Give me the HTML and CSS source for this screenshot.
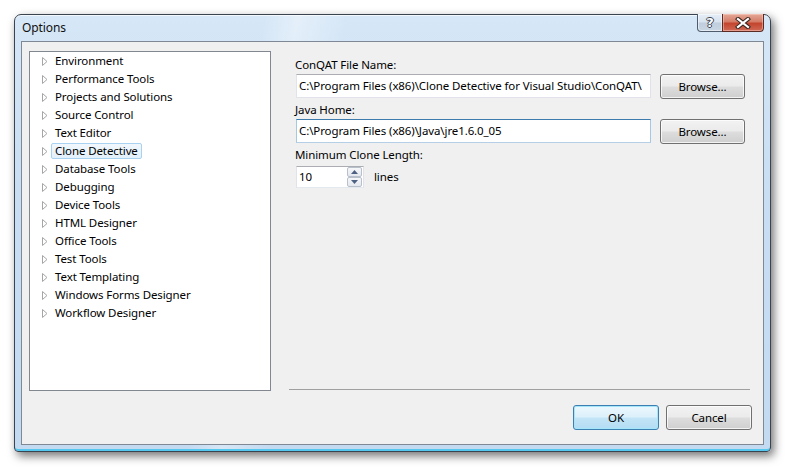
FILE: index.html
```html
<!DOCTYPE html>
<html>
<head>
<meta charset="utf-8">
<title>Options</title>
<link rel="stylesheet" href="styles.css">
</head>
<body>
<div class="window">
  <div class="titlebar">
    <span class="title">Options</span>
    <div class="caption-btns">
      <div class="cb help"><span class="q">?</span></div>
      <div class="cb close">
        <svg width="16" height="12" viewBox="0 0 16 12">
          <path d="M3 2 L13 10 M13 2 L3 10" stroke="#3b2620" stroke-width="4.2" stroke-linecap="square"/>
          <path d="M3 2 L13 10 M13 2 L3 10" stroke="#ffffff" stroke-width="2.2" stroke-linecap="square"/>
        </svg>
      </div>
    </div>
  </div>
  <div class="client">
    <div class="tree">
      <div class="node"><svg class="arrow" width="6" height="9" viewBox="0 0 6 9"><path d="M0.5 0.5 L5 4.5 L0.5 8.5 Z" fill="#fff" stroke="#a6a6a6"/></svg><span class="label">Environment</span></div>
      <div class="node"><svg class="arrow" width="6" height="9" viewBox="0 0 6 9"><path d="M0.5 0.5 L5 4.5 L0.5 8.5 Z" fill="#fff" stroke="#a6a6a6"/></svg><span class="label">Performance Tools</span></div>
      <div class="node"><svg class="arrow" width="6" height="9" viewBox="0 0 6 9"><path d="M0.5 0.5 L5 4.5 L0.5 8.5 Z" fill="#fff" stroke="#a6a6a6"/></svg><span class="label">Projects and Solutions</span></div>
      <div class="node"><svg class="arrow" width="6" height="9" viewBox="0 0 6 9"><path d="M0.5 0.5 L5 4.5 L0.5 8.5 Z" fill="#fff" stroke="#a6a6a6"/></svg><span class="label">Source Control</span></div>
      <div class="node"><svg class="arrow" width="6" height="9" viewBox="0 0 6 9"><path d="M0.5 0.5 L5 4.5 L0.5 8.5 Z" fill="#fff" stroke="#a6a6a6"/></svg><span class="label">Text Editor</span></div>
      <div class="node"><svg class="arrow" width="6" height="9" viewBox="0 0 6 9"><path d="M0.5 0.5 L5 4.5 L0.5 8.5 Z" fill="#fff" stroke="#a6a6a6"/></svg><span class="label selected">Clone Detective</span></div>
      <div class="node"><svg class="arrow" width="6" height="9" viewBox="0 0 6 9"><path d="M0.5 0.5 L5 4.5 L0.5 8.5 Z" fill="#fff" stroke="#a6a6a6"/></svg><span class="label">Database Tools</span></div>
      <div class="node"><svg class="arrow" width="6" height="9" viewBox="0 0 6 9"><path d="M0.5 0.5 L5 4.5 L0.5 8.5 Z" fill="#fff" stroke="#a6a6a6"/></svg><span class="label">Debugging</span></div>
      <div class="node"><svg class="arrow" width="6" height="9" viewBox="0 0 6 9"><path d="M0.5 0.5 L5 4.5 L0.5 8.5 Z" fill="#fff" stroke="#a6a6a6"/></svg><span class="label">Device Tools</span></div>
      <div class="node"><svg class="arrow" width="6" height="9" viewBox="0 0 6 9"><path d="M0.5 0.5 L5 4.5 L0.5 8.5 Z" fill="#fff" stroke="#a6a6a6"/></svg><span class="label">HTML Designer</span></div>
      <div class="node"><svg class="arrow" width="6" height="9" viewBox="0 0 6 9"><path d="M0.5 0.5 L5 4.5 L0.5 8.5 Z" fill="#fff" stroke="#a6a6a6"/></svg><span class="label">Office Tools</span></div>
      <div class="node"><svg class="arrow" width="6" height="9" viewBox="0 0 6 9"><path d="M0.5 0.5 L5 4.5 L0.5 8.5 Z" fill="#fff" stroke="#a6a6a6"/></svg><span class="label">Test Tools</span></div>
      <div class="node"><svg class="arrow" width="6" height="9" viewBox="0 0 6 9"><path d="M0.5 0.5 L5 4.5 L0.5 8.5 Z" fill="#fff" stroke="#a6a6a6"/></svg><span class="label">Text Templating</span></div>
      <div class="node"><svg class="arrow" width="6" height="9" viewBox="0 0 6 9"><path d="M0.5 0.5 L5 4.5 L0.5 8.5 Z" fill="#fff" stroke="#a6a6a6"/></svg><span class="label">Windows Forms Designer</span></div>
      <div class="node"><svg class="arrow" width="6" height="9" viewBox="0 0 6 9"><path d="M0.5 0.5 L5 4.5 L0.5 8.5 Z" fill="#fff" stroke="#a6a6a6"/></svg><span class="label">Workflow Designer</span></div>
    </div>
    <div class="panel">
      <div class="form">
        <div class="field-label first">ConQAT File Name:</div>
        <div class="field-row">
          <div class="textbox">C:\Program Files (x86)\Clone Detective for Visual Studio\ConQAT\</div>
          <button class="btn browse">Browse...</button>
        </div>
        <div class="field-label">Java Home:</div>
        <div class="field-row">
          <div class="textbox focused">C:\Program Files (x86)\Java\jre1.6.0_05</div>
          <button class="btn browse">Browse...</button>
        </div>
        <div class="field-label">Minimum Clone Length:</div>
        <div class="spin-row">
          <div class="spinbox">
            <span class="spin-value">10</span>
            <div class="spin-btns">
              <div class="spin-btn"><svg width="7" height="4" viewBox="0 0 7 4"><path d="M0 4 L3.5 0 L7 4 Z" fill="#4d6185"/></svg></div>
              <div class="spin-btn"><svg width="7" height="4" viewBox="0 0 7 4"><path d="M0 0 L3.5 4 L7 0 Z" fill="#4d6185"/></svg></div>
            </div>
          </div>
          <span class="spin-unit">lines</span>
        </div>
      </div>
      <div class="separator"></div>
      <div class="dialog-buttons">
        <button class="btn default">OK</button>
        <button class="btn">Cancel</button>
      </div>
    </div>
  </div>
</div>
</body>
</html>
```
FILE: styles.css
```css
* { box-sizing: border-box; }
html, body { margin: 0; padding: 0; }
body {
  background: #ffffff;
  width: 789px;
  height: 470px;
  overflow: hidden;
  font-family: "Noto Sans", "Open Sans", sans-serif;
  font-size: 11.5px;
  letter-spacing: -0.1px;
  color: #000;
}
.window {
  margin: 14px 0 0 14px;
  width: 757px;
  height: 438px;
  border: 1px solid #3a4350;
  border-radius: 7px 7px 4px 4px;
  padding: 0 6px 6px 6px;
  display: flex;
  flex-direction: column;
  background:
    linear-gradient(100deg, rgba(255,255,255,0) 30%, rgba(255,255,255,0.35) 34%, rgba(255,255,255,0) 40%),
    linear-gradient(180deg, #d6e7f7 0%, #c9def3 40%, #c3daf1 100%);
  box-shadow: inset 0 -2px 0 #55c8ef, inset 0 1px 0 rgba(255,255,255,0.7), 3px 4px 10px rgba(0,0,0,0.55);
}
.titlebar {
  height: 26px;
  display: flex;
  align-items: flex-start;
  justify-content: space-between;
}
.title {
  margin: 5px 0 0 1px;
  line-height: 15px;
  font-size: 12px;
  color: #111;
}
.caption-btns {
  display: flex;
  margin-top: -1px;
}
.cb {
  height: 18px;
  border: 1px solid #4f5c6e;
  border-top: none;
  display: flex;
  align-items: center;
  justify-content: center;
}
.help {
  width: 26px;
  border-radius: 0 0 0 4px;
  background: linear-gradient(180deg, #e6eef7 0%, #d7e2ee 48%, #bfcddd 52%, #c9d6e3 100%);
  box-shadow: inset 0 0 0 1px rgba(255,255,255,0.5);
}
.q {
  font-family: "DejaVu Sans", sans-serif;
  font-weight: bold;
  font-size: 13px;
  line-height: 13px;
  color: #fff;
  text-shadow: 1px 0 0 #3b4450, -1px 0 0 #3b4450, 0 1px 0 #3b4450, 0 -1px 0 #3b4450;
}
.close {
  width: 42px;
  margin-left: -1px;
  border-radius: 0 0 4px 0;
  border-color: #5b2a22;
  background: linear-gradient(180deg, #e4a797 0%, #d47d68 45%, #c4452e 55%, #cf6a55 100%);
  box-shadow: inset 0 0 0 1px rgba(255,220,210,0.45);
}
.close svg { display: block; }

.client {
  height: 404px;
  border: 1px solid #7f8996;
  background: #f0f0f0;
  display: flex;
  padding: 9px 13px 0 7px;
}
.tree {
  width: 242px;
  height: 340px;
  border: 1px solid #828790;
  background: #fff;
  flex: none;
}
.node {
  height: 18px;
  display: flex;
  align-items: center;
  padding-left: 12px;
}
.arrow { display: block; margin-right: 3px; flex: none; }
.label {
  line-height: 14px;
  padding: 0 3px;
  border: 1px solid transparent;
  border-radius: 2px;
  white-space: nowrap;
}
.label.selected {
  background: linear-gradient(180deg, #f1f8fd 0%, #e3f1fb 100%);
  border-color: #a8d2ef;
}

.panel {
  flex: 1;
  margin-left: 18px;
  display: flex;
  flex-direction: column;
}
.form {
  height: 338px;
  padding: 6px 0 0 6px;
}
.field-label {
  line-height: 16px;
  margin-top: 3px;
  white-space: nowrap;
}
.field-label.first { margin-top: 0; }
.field-row {
  display: flex;
  align-items: flex-start;
  margin-top: 1px;
  height: 25px;
}
.textbox {
  width: 355px;
  height: 24px;
  margin-left: 1px;
  border: 1px solid #e2e3ea;
  border-top-color: #abadb3;
  background: #fff;
  padding: 0 2px;
  line-height: 22px;
  white-space: nowrap;
  overflow: hidden;
  flex: none;
}
.textbox.focused {
  border-color: #b5cfe7;
  border-top-color: #3d7bad;
  border-left-color: #a4c9e3;
  border-right-color: #a4c9e3;
}
.btn {
  font-family: inherit;
  font-size: 11.5px;
  letter-spacing: -0.1px;
  color: #000;
  width: 86px;
  height: 25px;
  border: 1px solid #707070;
  border-radius: 3px;
  padding: 0;
  background: linear-gradient(180deg, #f2f2f2 0%, #ebebeb 48%, #dddddd 52%, #cfcfcf 100%);
  box-shadow: inset 0 0 0 1px rgba(255,255,255,0.75);
}
.browse {
  width: 85px;
  margin-left: 9px;
}
.spin-row {
  display: flex;
  align-items: center;
  margin-top: 3px;
}
.spinbox {
  width: 68px;
  height: 22px;
  margin-left: 1px;
  border: 1px solid #abadb3;
  border-color: #abadb3 #e2e3ea #e3e9ef #e2e3ea;
  background: #fff;
  display: flex;
  align-items: center;
  padding-left: 2px;
}
.spin-value { flex: 1; line-height: 18px; }
.spin-btns {
  width: 15px;
  height: 20px;
  margin-right: 1px;
  display: flex;
  flex-direction: column;
}
.spin-btn {
  flex: 1;
  border: 1px solid #b8c0cc;
  border-radius: 2px;
  background: linear-gradient(180deg, #f6f7f9 0%, #e4e8ee 100%);
  display: flex;
  align-items: center;
  justify-content: center;
}
.spin-unit { margin-left: 10px; line-height: 16px; }

.separator {
  height: 1px;
  background: #a0a0a0;
}
.dialog-buttons {
  display: flex;
  justify-content: flex-end;
  gap: 7px;
  margin-top: 15px;
  margin-right: -2px;
}
.btn.default {
  border-color: #3c7fb1;
  background: linear-gradient(180deg, #ecf7fd 0%, #dcf0fb 48%, #c3e4f6 52%, #b3dcf3 100%);
  box-shadow: inset 0 0 0 1px #a6e6fb;
}
```
